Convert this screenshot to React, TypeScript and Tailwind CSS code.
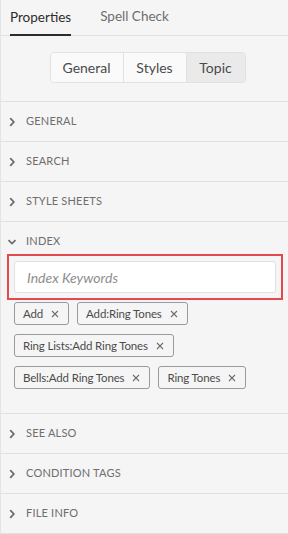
import React from "react";

const sections = ["GENERAL", "SEARCH", "STYLE SHEETS"];
const bottomSections = ["SEE ALSO", "CONDITION TAGS", "FILE INFO"];
const keywordRows = [
  ["Add", "Add:Ring Tones"],
  ["Ring Lists:Add Ring Tones"],
  ["Bells:Add Ring Tones", "Ring Tones"],
];

const Chevron: React.FC<{ open?: boolean }> = ({ open }) => (
  <svg width="10" height="10" viewBox="0 0 10 10" className="shrink-0">
    {open ? (
      <path d="M1.5 3.2 L5 6.6 L8.5 3.2" fill="none" stroke="#6e6e6e" strokeWidth="1.8" />
    ) : (
      <path d="M3.2 1.2 L6.8 5 L3.2 8.8" fill="none" stroke="#6e6e6e" strokeWidth="1.8" />
    )}
  </svg>
);

const CloseIcon: React.FC = () => (
  <svg width="8" height="8" viewBox="0 0 8 8" className="shrink-0">
    <path d="M1 1 L7 7 M7 1 L1 7" stroke="#6e6e6e" strokeWidth="1.1" />
  </svg>
);

const SectionHeader: React.FC<{ title: string; open?: boolean }> = ({ title, open }) => (
  <div className="h-[39px] flex items-center pl-[6px] gap-[9px] cursor-pointer">
    <Chevron open={open} />
    <span className="text-[11px] tracking-[0.2px] text-[#6e6e6e]">{title}</span>
  </div>
);

const App: React.FC = () => {
  return (
    <div
      className="w-[288px] h-[534px] bg-[#f5f5f5] border-l border-[#e4e4e4] overflow-hidden"
      style={{ fontFamily: "Lato, 'Open Sans', sans-serif" }}
    >
      <div className="h-9 flex items-end border-b border-[#e1e1e1] pl-[9px] gap-[29px]">
        <div className="text-[13.5px] text-[#2c2c2c] border-b-2 border-[#2c2c2c] pb-[7px] -mb-px">Properties</div>
        <div className="text-[13.5px] text-[#6e6e6e] pb-[9px]">Spell Check</div>
      </div>

      <div className="flex justify-center pt-4 pb-[18px] pl-[6px]">
        <div className="flex h-[31px] rounded border border-[#e1e1e1] text-[14px] text-[#4b4b4b] overflow-hidden">
          <button className="w-[73px] bg-[#fafafa] border-r border-[#e1e1e1]">General</button>
          <button className="w-[63px] bg-[#fafafa] border-r border-[#e1e1e1]">Styles</button>
          <button className="w-[58px] bg-[#eaeaea]">Topic</button>
        </div>
      </div>

      {sections.map((s) => (
        <div key={s} className="border-t border-[#e1e1e1]">
          <SectionHeader title={s} />
        </div>
      ))}

      <div className="border-t border-[#e1e1e1]">
        <SectionHeader title="INDEX" open />
        <div className="pl-[6px] pr-[5px] pb-[24px]">
          <div className="-mt-[7px] border-2 border-[#e5484d] p-[5px]">
            <input
              placeholder="Index Keywords"
              className="w-full h-8 bg-white border border-[#e1e1e1] rounded-[3px] px-3 text-[14px] italic placeholder:text-[#8e8e8e] outline-none"
            />
          </div>
          <div className="mt-[2px] flex flex-col gap-[9px] pl-[7px]">
            {keywordRows.map((row, i) => (
              <div key={i} className="flex gap-2">
                {row.map((k) => (
                  <div
                    key={k}
                    className="h-[23px] flex items-center gap-2 pl-[8px] pr-[9px] border border-[#9a9a9a] rounded-[3px] text-[11.5px] tracking-[-0.15px] text-[#4b4b4b]"
                  >
                    <span>{k}</span>
                    <CloseIcon />
                  </div>
                ))}
              </div>
            ))}
          </div>
        </div>
      </div>

      {bottomSections.map((s) => (
        <div key={s} className="border-t border-[#e1e1e1]">
          <SectionHeader title={s} />
        </div>
      ))}
      <div className="border-t border-[#e1e1e1]" />
    </div>
  );
};

export default App;
